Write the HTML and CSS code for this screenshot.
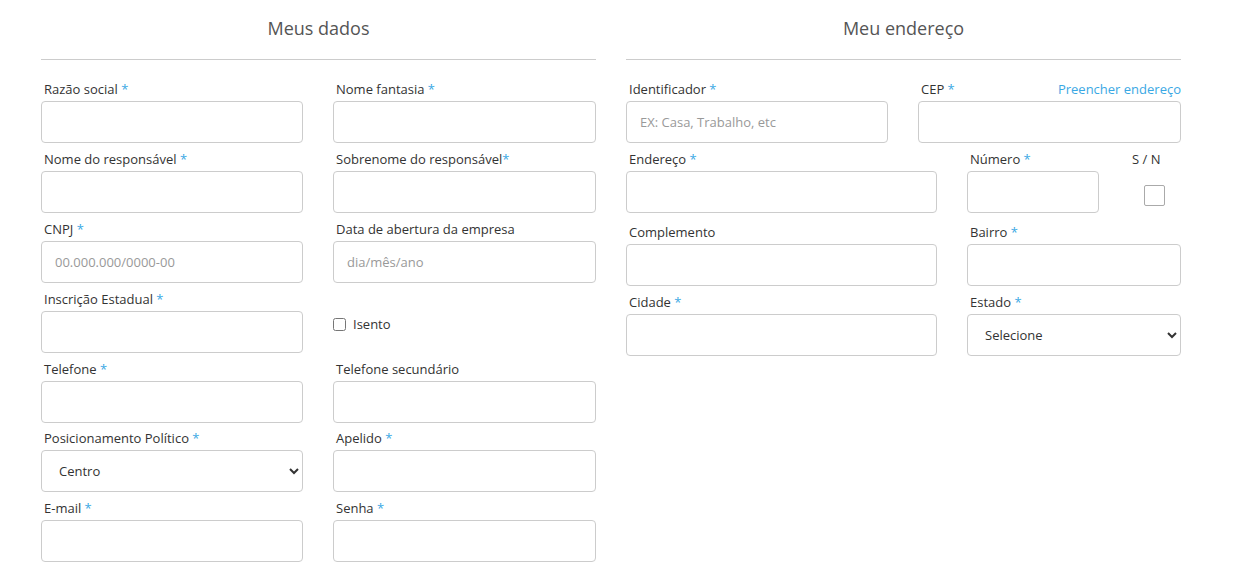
FILE: index.html
```html
<!DOCTYPE html>
<html lang="pt-BR">
  <head>
    <meta charset="UTF-8" />
    <meta name="viewport" content="width=device-width, initial-scale=1.0" />
    <title>Cadastro</title>
    <link rel="stylesheet" href="styles.css">
  </head>
  <body>
    <div class="container">
      <section class="panel">
        <h2>Meus dados</h2>
        <hr />
        <div class="row two">
          <div class="field">
            <label>Razão social <span class="req">*</span></label>
            <input type="text" />
          </div>
          <div class="field">
            <label>Nome fantasia <span class="req">*</span></label>
            <input type="text" />
          </div>
        </div>
        <div class="row two">
          <div class="field">
            <label>Nome do responsável <span class="req">*</span></label>
            <input type="text" />
          </div>
          <div class="field">
            <label>Sobrenome do responsável<span class="req">*</span></label>
            <input type="text" />
          </div>
        </div>
        <div class="row two">
          <div class="field">
            <label>CNPJ <span class="req">*</span></label>
            <input type="text" placeholder="00.000.000/0000-00" />
          </div>
          <div class="field">
            <label>Data de abertura da empresa</label>
            <input type="text" placeholder="dia/mês/ano" />
          </div>
        </div>
        <div class="row two">
          <div class="field">
            <label>Inscrição Estadual <span class="req">*</span></label>
            <input type="text" />
          </div>
          <div class="field check-field">
            <input type="checkbox" id="isento" />
            <label for="isento">Isento</label>
          </div>
        </div>
        <div class="row two tight">
          <div class="field">
            <label>Telefone <span class="req">*</span></label>
            <input type="text" />
          </div>
          <div class="field">
            <label>Telefone secundário</label>
            <input type="text" />
          </div>
        </div>
        <div class="row two">
          <div class="field">
            <label>Posicionamento Político <span class="req">*</span></label>
            <select>
              <option>Centro</option>
            </select>
          </div>
          <div class="field">
            <label>Apelido <span class="req">*</span></label>
            <input type="text" />
          </div>
        </div>
        <div class="row two">
          <div class="field">
            <label>E-mail <span class="req">*</span></label>
            <input type="text" />
          </div>
          <div class="field">
            <label>Senha <span class="req">*</span></label>
            <input type="password" />
          </div>
        </div>
      </section>

      <section class="panel">
        <h2>Meu endereço</h2>
        <hr />
        <div class="row two">
          <div class="field">
            <label>Identificador <span class="req">*</span></label>
            <input type="text" placeholder="EX: Casa, Trabalho, etc" />
          </div>
          <div class="field">
            <div class="label-line">
              <label>CEP <span class="req">*</span></label>
              <a href="#" class="fill-link">Preencher endereço</a>
            </div>
            <input type="text" />
          </div>
        </div>
        <div class="row street">
          <div class="field">
            <label>Endereço <span class="req">*</span></label>
            <input type="text" />
          </div>
          <div class="field">
            <label>Número <span class="req">*</span></label>
            <input type="text" />
          </div>
          <div class="field sn">
            <label>S / N</label>
            <input type="checkbox" class="sn-box" />
          </div>
        </div>
        <div class="row wide">
          <div class="field">
            <label>Complemento</label>
            <input type="text" />
          </div>
          <div class="field">
            <label>Bairro <span class="req">*</span></label>
            <input type="text" />
          </div>
        </div>
        <div class="row wide">
          <div class="field">
            <label>Cidade <span class="req">*</span></label>
            <input type="text" />
          </div>
          <div class="field">
            <label>Estado <span class="req">*</span></label>
            <select>
              <option>Selecione</option>
            </select>
          </div>
        </div>
      </section>
    </div>
  </body>
</html>
```

FILE: styles.css
```css
body {
  font-family: "Open Sans", Arial, sans-serif;
  font-size: 13px;
  color: #333;
  margin: 8px;
  background: #fff;
}
.container {
  display: grid;
  grid-template-columns: 555px 555px;
  column-gap: 30px;
  padding-left: 33px;
}
h2 {
  font-size: 18px;
  font-weight: 400;
  color: #555;
  text-align: center;
  line-height: 24px;
  margin: 8px 0 0;
}
hr {
  border: none;
  border-top: 1px solid #ccc;
  margin: 19px 0 19px;
}
.row {
  display: grid;
  column-gap: 30px;
  margin-bottom: 6px;
}
.row.tight {
  margin-bottom: 5px;
}
.two {
  grid-template-columns: 262px 263px;
}
.street {
  grid-template-columns: 311px 132px 52px;
}
.wide {
  grid-template-columns: 311px 214px;
}
.field {
  display: flex;
  flex-direction: column;
}
.field label {
  line-height: 20px;
  margin-bottom: 2px;
  padding-left: 3px;
}
.req {
  color: #3aa8e4;
}
.label-line {
  display: flex;
  justify-content: space-between;
  align-items: center;
}
.fill-link {
  color: #3aa8e4;
  text-decoration: none;
  line-height: 20px;
  margin-bottom: 2px;
}
input[type="text"],
input[type="password"],
select {
  box-sizing: border-box;
  height: 42px;
  width: 100%;
  border: 1px solid #ccc;
  border-radius: 4px;
  padding: 0 13px;
  font-family: inherit;
  font-size: 13px;
  color: #333;
  background: #fff;
}
select {
  padding-left: 13px;
}
input::placeholder {
  color: #999;
}
.check-field {
  flex-direction: row;
  align-items: center;
  align-self: start;
  margin-top: 25px;
}
.check-field input {
  margin: 0 7px 0 0;
  width: 13px;
  height: 13px;
}
.check-field label {
  padding: 0;
  margin: 0;
}
.sn-box {
  appearance: none;
  width: 21px;
  height: 21px;
  border: 1px solid #aaa;
  border-radius: 2px;
  margin: 14px 0 10px 15px;
  background: #fff;
}
```
